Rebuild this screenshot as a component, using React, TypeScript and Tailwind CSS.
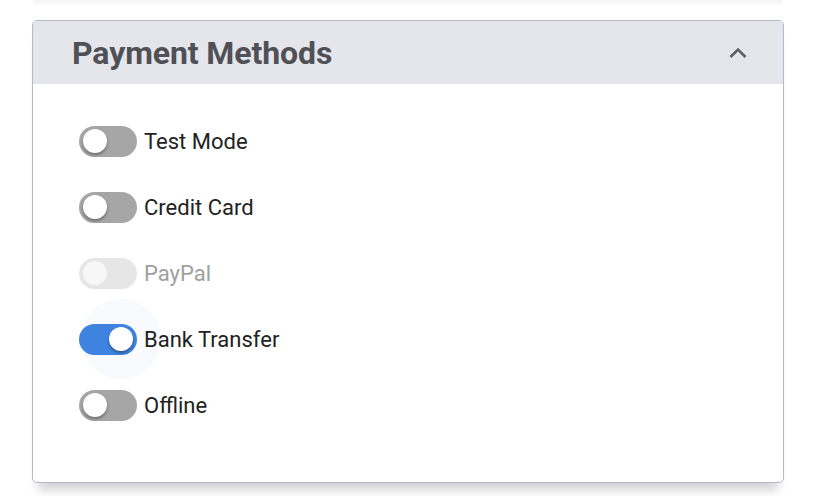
import { FC } from "react";

type Method = { label: string; on?: boolean; disabled?: boolean; focused?: boolean };

const methods: Method[] = [
  { label: "Test Mode" },
  { label: "Credit Card" },
  { label: "PayPal", disabled: true },
  { label: "Bank Transfer", on: true, focused: true },
  { label: "Offline" },
];

const Toggle: FC<Method> = ({ on, disabled, focused }) => {
  const track = disabled ? "bg-[#e6e6e6]" : on ? "bg-[#3f83e0]" : "bg-[#a6a6a6]";
  const knob = disabled
    ? "bg-[#f7f7f7]"
    : "bg-white shadow-[0_2px_3px_rgba(0,0,0,0.35)]";
  return (
    <div className="relative h-[31px] w-[58px] shrink-0">
      {focused && (
        <div className="absolute right-[-24px] top-1/2 h-[80px] w-[80px] -translate-y-1/2 rounded-full bg-[#f8fafe]" />
      )}
      <div className={`relative flex h-full w-full items-center rounded-full px-[4px] ${track} ${on ? "justify-end" : "justify-start"}`}>
        <div className={`h-[24px] w-[24px] rounded-full ${knob}`} />
      </div>
    </div>
  );
};

export default function App() {
  return (
    <div className="min-h-screen bg-white font-['Roboto',sans-serif]">
      <div className="ml-[33px] mr-[35px] h-[6px] bg-gradient-to-b from-[#f3f3f3] to-white" />
      <div className="ml-[32px] mr-[34px] mt-[14px] overflow-hidden rounded-[5px] border border-[#b8b6cc] bg-white shadow-[0_13px_10px_-6px_rgba(0,0,0,0.18)]">
        <div className="flex h-[63px] items-center justify-between bg-[#e5e6eb] pl-[39px] pr-[35px]">
          <h2 className="text-[32px] font-bold tracking-[-0.1px] text-[#505156]">Payment Methods</h2>
          <svg width="20" height="12" viewBox="0 0 20 12" fill="none">
            <path d="M2.5 10 L10 2.5 L17.5 10" stroke="#5f6063" strokeWidth="2.6" />
          </svg>
        </div>
        <div className="flex flex-col pb-[44px] pl-[46px] pt-[24px]">
          {methods.map((m) => (
            <div key={m.label} className="flex h-[66px] items-center gap-[7px]">
              <Toggle {...m} />
              <span className={`relative text-[22px] ${m.disabled ? "text-[#a0a0a0]" : "text-[#222222]"}`}>
                {m.label}
              </span>
            </div>
          ))}
        </div>
      </div>
    </div>
  );
}
